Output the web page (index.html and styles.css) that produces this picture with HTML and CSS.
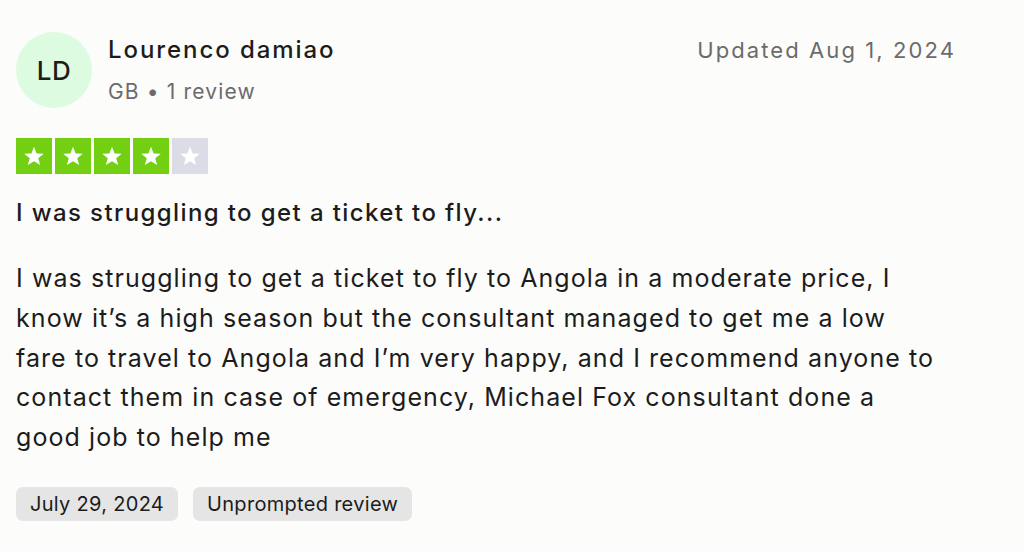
FILE: index.html
```html
<!DOCTYPE html>
<html>
<head>
<meta charset="utf-8">
<link rel="stylesheet" href="styles.css">
</head>
<body>
<article class="review">
  <header class="head">
    <div class="user">
      <div class="avatar">LD</div>
      <div class="who">
        <div class="name">Lourenco damiao</div>
        <div class="meta">GB • 1 review</div>
      </div>
    </div>
    <div class="updated">Updated Aug 1, 2024</div>
  </header>
  <div class="stars">
    <span class="star on"><svg viewBox="0 0 24 24"><path d="M12 3.5l2.4 6.1 6.6.3-5.1 4.1 1.8 6.4L12 16.8 6.3 20.4l1.8-6.4L3 9.9l6.6-.3z"/></svg></span>
    <span class="star on"><svg viewBox="0 0 24 24"><path d="M12 3.5l2.4 6.1 6.6.3-5.1 4.1 1.8 6.4L12 16.8 6.3 20.4l1.8-6.4L3 9.9l6.6-.3z"/></svg></span>
    <span class="star on"><svg viewBox="0 0 24 24"><path d="M12 3.5l2.4 6.1 6.6.3-5.1 4.1 1.8 6.4L12 16.8 6.3 20.4l1.8-6.4L3 9.9l6.6-.3z"/></svg></span>
    <span class="star on"><svg viewBox="0 0 24 24"><path d="M12 3.5l2.4 6.1 6.6.3-5.1 4.1 1.8 6.4L12 16.8 6.3 20.4l1.8-6.4L3 9.9l6.6-.3z"/></svg></span>
    <span class="star"><svg viewBox="0 0 24 24"><path d="M12 3.5l2.4 6.1 6.6.3-5.1 4.1 1.8 6.4L12 16.8 6.3 20.4l1.8-6.4L3 9.9l6.6-.3z"/></svg></span>
  </div>
  <h2 class="title">I was struggling to get a ticket to fly...</h2>
  <p class="body">I was struggling to get a ticket to fly to Angola in a moderate price, I know it’s a high season but the consultant managed to get me a low fare to travel to Angola and I’m very happy, and I recommend anyone to contact them in case of emergency, Michael Fox consultant done a good job to help me</p>
  <div class="tags">
    <span class="tag">July 29, 2024</span>
    <span class="tag">Unprompted review</span>
  </div>
</article>
</body>
</html>
```
FILE: styles.css
```css
html, body {
  margin: 0;
  padding: 0;
  background: #fcfcfb;
}
body {
  font-family: Inter, "Noto Sans", sans-serif;
  color: #1c1c1c;
  width: 1024px;
  height: 552px;
  overflow: hidden;
}
.review {
  padding: 32px 68px 0 16px;
}
.head {
  display: flex;
  justify-content: space-between;
  align-items: flex-start;
}
.user {
  display: flex;
  gap: 16px;
}
.avatar {
  width: 76px;
  height: 76px;
  border-radius: 50%;
  background: #dcfbe0;
  display: flex;
  align-items: center;
  justify-content: center;
  font-size: 26px;
  font-weight: 500;
  letter-spacing: 0.02em;
  color: #1c1c1c;
}
.who {
  padding-top: 2px;
}
.name {
  font-size: 24px;
  font-weight: 500;
  letter-spacing: 0.08em;
  line-height: 32px;
}
.meta {
  font-size: 21px;
  letter-spacing: 0.055em;
  color: #6b6b6b;
  line-height: 30px;
  margin-top: 11px;
}
.updated {
  font-size: 22px;
  letter-spacing: 0.095em;
  color: #6b6b6b;
  line-height: 32px;
  padding-top: 2px;
}
.stars {
  display: flex;
  gap: 3px;
  margin-top: 30px;
}
.star {
  width: 36px;
  height: 36px;
  background: #dcdce6;
  display: flex;
  align-items: center;
  justify-content: center;
}
.star.on {
  background: #73cf11;
}
.star svg {
  width: 26px;
  height: 26px;
  fill: #fff;
}
.title {
  font-size: 24px;
  font-weight: 500;
  letter-spacing: 0.058em;
  line-height: 32px;
  margin: 23px 0 0;
}
.body {
  width: 926.5px;
  font-size: 25px;
  letter-spacing: 0.043em;
  line-height: 39.8px;
  margin: 30px 0 0;
}
.tags {
  display: flex;
  gap: 15px;
  margin-top: 29px;
}
.tag {
  background: #e5e5e5;
  border-radius: 7px;
  font-size: 20px;
  letter-spacing: 0.015em;
  line-height: 34px;
  padding: 0 14px;
}
```
